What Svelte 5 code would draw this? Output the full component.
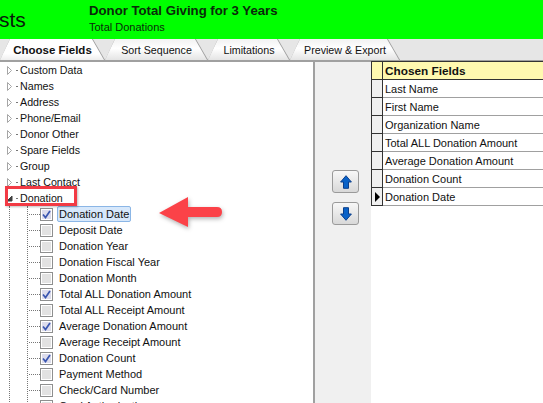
<script>
  const closed = ["Custom Data", "Names", "Address", "Phone/Email", "Donor Other", "Spare Fields", "Group", "Last Contact"];

  const fields = [
    { name: "Donation Date", on: true, selected: true },
    { name: "Deposit Date" },
    { name: "Donation Year" },
    { name: "Donation Fiscal Year" },
    { name: "Donation Month" },
    { name: "Total ALL Donation Amount", on: true },
    { name: "Total ALL Receipt Amount" },
    { name: "Average Donation Amount", on: true },
    { name: "Average Receipt Amount" },
    { name: "Donation Count", on: true },
    { name: "Payment Method" },
    { name: "Check/Card Number" },
    { name: "Card Authorization" },
  ];

  const chosen = [
    "Last Name",
    "First Name",
    "Organization Name",
    "Total ALL Donation Amount",
    "Average Donation Amount",
    "Donation Count",
    "Donation Date",
  ];

  const tabs = [
    { name: "Choose Fields", width: 105, active: true },
    { name: "Sort Sequence", width: 103 },
    { name: "Limitations", width: 82 },
    { name: "Preview & Export", width: 110 },
  ];
</script>

<div class="screen">
  <header class="banner">
    <div class="app-title">sts</div>
    <div class="report">
      <div class="report-name">Donor Total Giving for 3 Years</div>
      <div class="report-sub">Total Donations</div>
    </div>
  </header>

  <nav class="tabstrip">
    {#each tabs as tab}
      <div class="tab" class:active={tab.active} style="width:{tab.width}px">
        <div class="face"><span>{tab.name}</span></div>
      </div>
    {/each}
  </nav>

  <main class="body">
    <section class="tree">
      {#each closed as name}
        <div class="node">
          <svg class="twisty" width="7" height="9" viewBox="0 0 7 9"><path d="M1.5 .5 L5.5 4.5 L1.5 8.5 Z" fill="#fff" stroke="#a6a6a6" /></svg>
          <i class="stub"></i>
          <span>{name}</span>
        </div>
      {/each}
      <div class="node">
        <svg class="twisty" width="7" height="9" viewBox="0 0 7 9"><path d="M1 7 L6 2 L6 7 Z" fill="#404040" stroke="#404040" /></svg>
        <i class="stub"></i>
        <span class="boxed">Donation</span>
      </div>
      <div class="children">
        <div class="leaves">
          {#each fields as f}
            <div class="leaf">
              <i class="branch"></i>
              <span class="check" class:on={f.on}>
                {#if f.on}
                  <svg width="9" height="9" viewBox="0 0 9 9"><path d="M1 4.5 L3.5 7.5 L8 1" fill="none" stroke="#3a56b0" stroke-width="1.7" /></svg>
                {/if}
              </span>
              <span class="label" class:selected={f.selected}>{f.name}</span>
            </div>
          {/each}
        </div>
      </div>
      <svg class="callout" width="75" height="45" viewBox="0 0 75 45">
        <path d="M4 23 L33 7 L33 17 L62 17 Q67 17 67 22 Q67 27 62 27 L33 27 L33 37 Z" fill="#fb4248" />
      </svg>
    </section>

    <aside class="mover">
      <button class="move" aria-label="Move up">
        <svg width="12" height="14" viewBox="0 0 12 14"><path d="M6 .7 L11.4 7 L8.5 7 L8.5 13.3 L3.5 13.3 L3.5 7 L.6 7 Z" fill="#0a62c8" stroke="#0b3f8c" /></svg>
      </button>
      <button class="move" aria-label="Move down">
        <svg width="12" height="14" viewBox="0 0 12 14"><path d="M6 13.3 L11.4 7 L8.5 7 L8.5 .7 L3.5 .7 L3.5 7 L.6 7 Z" fill="#0a62c8" stroke="#0b3f8c" /></svg>
      </button>
    </aside>

    <section class="grid">
      <div class="row head">
        <div class="gutter"></div>
        <div class="cell">Chosen Fields</div>
      </div>
      {#each chosen as name, i}
        <div class="row">
          <div class="gutter">
            {#if i === chosen.length - 1}<i class="pointer"></i>{/if}
          </div>
          <div class="cell">{name}</div>
        </div>
      {/each}
    </section>
  </main>
</div>

<style>
  :global(body) {
    margin: 0;
    background: #fff;
  }

  .screen {
    width: 543px;
    height: 403px;
    overflow: hidden;
    display: flex;
    flex-direction: column;
    font-family: "Liberation Sans", Arial, sans-serif;
    font-size: 11px;
    color: #111;
  }

  .banner {
    height: 39px;
    flex: none;
    background: #00ff00;
    display: flex;
  }

  .app-title {
    font-size: 21px;
    margin-left: -1px;
    padding-top: 8px;
    width: 90px;
    color: #0a1a0a;
  }

  .report {
    padding-top: 2px;
  }

  .report-name {
    font-size: 13.2px;
    font-weight: bold;
    line-height: 17px;
    color: #0a2a0a;
  }

  .report-sub {
    font-size: 11px;
    line-height: 17px;
    color: #0a2a0a;
  }

  .tabstrip {
    height: 21px;
    flex: none;
    display: flex;
    background: #e6e6e6;
    border-bottom: 2px solid #a0a0a0;
    font-size: 10.7px;
  }

  .tab {
    position: relative;
    flex: none;
  }

  .face {
    height: 100%;
    text-align: center;
    line-height: 23px;
    background: linear-gradient(#f2f2f2, #fff 45%, #e4e4e4);
    clip-path: polygon(10px 0, calc(100% - 12px) 0, 100% 100%, 0 100%);
  }

  .tab::before,
  .tab::after {
    content: "";
    position: absolute;
    top: 0;
    width: 1px;
    height: 21px;
    background: #9c9c9c;
  }

  .tab::before {
    left: 5px;
    transform: skewX(-25deg);
  }

  .tab::after {
    right: 6px;
    transform: skewX(30deg);
  }

  .tab.active {
    font-weight: bold;
    font-size: 11.5px;
  }

  .tab.active .face {
    background: linear-gradient(#fff, #fff 70%, #eee);
  }

  .body {
    flex: 1;
    display: flex;
    min-height: 0;
  }

  .tree {
    position: relative;
    width: 313px;
    flex: none;
    background: #fff;
    overflow: hidden;
    line-height: 14px;
  }

  .node {
    height: 16px;
    display: flex;
    align-items: center;
    padding-left: 6px;
    font-size: 10.7px;
  }

  .twisty {
    flex: none;
  }

  .stub {
    width: 2px;
    height: 1px;
    margin: 1px 2px 0 3px;
    background: #777;
  }

  .boxed {
    position: relative;
  }

  .boxed::before {
    content: "";
    position: absolute;
    left: -15px;
    top: -5px;
    width: 72px;
    height: 20px;
    box-sizing: border-box;
    border: 3px solid #f23a44;
    box-shadow: 1px 1px 2px rgba(0, 0, 0, 0.25);
  }

  .children {
    margin-left: 9px;
    padding-left: 17px;
    border-left: 1px dotted #777;
  }

  .leaves {
    border-left: 1px dotted #777;
  }

  .leaf {
    height: 16px;
    display: flex;
    align-items: center;
  }

  .branch {
    width: 11px;
    margin-left: 1px;
    flex: none;
    border-top: 1px dotted #777;
  }

  .check {
    width: 13px;
    height: 13px;
    box-sizing: border-box;
    flex: none;
    border: 1px solid #8e8f8f;
    background: #e2e2e2;
    box-shadow: inset 0 0 0 1px #fff;
    display: flex;
    align-items: center;
    justify-content: center;
  }

  .check.on {
    background: #dcdcec;
  }

  .label {
    margin-left: 4px;
    padding: 0 1px;
    border: 1px solid transparent;
    white-space: nowrap;
  }

  .label.selected {
    background: #d7e8fb;
    border-color: #8bb6e6;
    border-radius: 2px;
  }

  .callout {
    position: absolute;
    left: 155px;
    top: 128px;
    filter: drop-shadow(1px 2px 2px rgba(0, 0, 0, 0.3));
  }

  .mover {
    width: 58px;
    flex: none;
    box-sizing: border-box;
    background: #f0f0f0;
    border-left: 2px solid #a0a0a0;
    padding-top: 108px;
    padding-left: 5px;
    display: flex;
    flex-direction: column;
    align-items: center;
    gap: 9px;
  }

  .move {
    width: 27px;
    height: 23px;
    padding: 0;
    border: 1px solid #9a9a9a;
    border-radius: 3px;
    background: linear-gradient(#f8f8f8, #d8d8d8);
    display: flex;
    align-items: center;
    justify-content: center;
  }

  .grid {
    flex: 1;
    background: #fff;
    margin-top: -1px;
    border-top: 1px solid #333;
    font-size: 11px;
  }

  .row {
    height: 18px;
    display: flex;
    box-sizing: border-box;
    border-bottom: 1px solid #a0a0a0;
  }

  .gutter {
    position: relative;
    width: 12px;
    box-sizing: border-box;
    flex: none;
    background: #f0f0f0;
    border-left: 1px solid #333;
    border-right: 1px solid #333;
    border-bottom: 1px solid #333;
    margin-bottom: -1px;
  }

  .cell {
    padding: 1px 0 0 2px;
    line-height: 17px;
    white-space: nowrap;
  }

  .head {
    border-bottom-color: #333;
    background: #fff9b0;
  }

  .head .gutter {
    background: #fff9b0;
  }

  .head .cell {
    font-weight: bold;
    font-size: 11.8px;
  }

  .pointer {
    position: absolute;
    left: 3px;
    top: 4px;
    border-left: 5px solid #000;
    border-top: 5px solid transparent;
    border-bottom: 5px solid transparent;
  }
</style>
